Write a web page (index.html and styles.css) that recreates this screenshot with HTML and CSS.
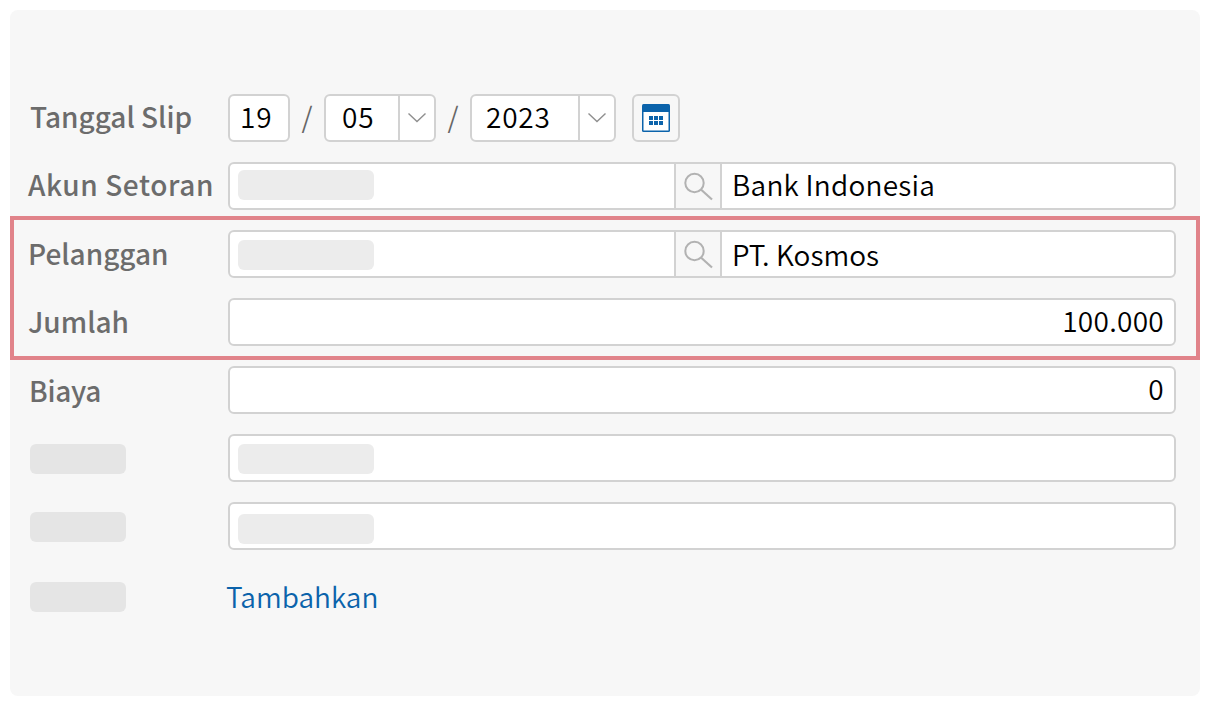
FILE: index.html
```html
<!DOCTYPE html>
<html lang="id">
<head>
<meta charset="utf-8">
<title>Slip</title>
<link rel="stylesheet" href="styles.css">
</head>
<body>
<main class="panel">
  <div class="row">
    <label class="label label-date">Tanggal Slip</label>
    <div class="date">
      <div class="box box-day"><span class="val">19</span></div>
      <span class="slash">/</span>
      <div class="box box-month"><span class="val">05</span><span class="caret"><svg width="18" height="10" viewBox="0 0 18 10"><path d="M0.5 0.5 L9 8.5 L17.5 0.5" fill="none" stroke="#8f8f8f" stroke-width="1.4"/></svg></span></div>
      <span class="slash">/</span>
      <div class="box box-year"><span class="val">2023</span><span class="caret"><svg width="18" height="10" viewBox="0 0 18 10"><path d="M0.5 0.5 L9 8.5 L17.5 0.5" fill="none" stroke="#8f8f8f" stroke-width="1.4"/></svg></span></div>
      <button class="cal" type="button"><svg width="28" height="28" viewBox="0 0 28 28"><rect x="0" y="0" width="28" height="28" rx="1.5" fill="#0b63ab"/><rect x="1.5" y="8" width="25" height="18.5" fill="#fff"/><g fill="#0b63ab"><rect x="7" y="12" width="4" height="4"/><rect x="12" y="12" width="4" height="4"/><rect x="17" y="12" width="4" height="4"/><rect x="7" y="17" width="4" height="4"/><rect x="12" y="17" width="4" height="4"/><rect x="17" y="17" width="4" height="4"/></g></svg></button>
    </div>
  </div>
  <div class="row">
    <label class="label label-akun">Akun Setoran</label>
    <div class="box box-lookup">
      <div class="code code-high"><span class="blur"></span></div>
      <span class="search"><svg width="30" height="30" viewBox="0 0 30 30"><circle cx="11.5" cy="12" r="9.2" fill="none" stroke="#b2b2b2" stroke-width="2"/><path d="M18.2 18.7 L29 28.5" stroke="#b2b2b2" stroke-width="2.2" fill="none"/></svg></span>
      <span class="name name-up">Bank Indonesia</span>
    </div>
  </div>
  <section class="group">
    <div class="row">
      <label class="label">Pelanggan</label>
      <div class="box box-lookup">
        <div class="code code-low"><span class="blur"></span></div>
        <span class="search"><svg width="30" height="30" viewBox="0 0 30 30"><circle cx="11.5" cy="12" r="9.2" fill="none" stroke="#b2b2b2" stroke-width="2"/><path d="M18.2 18.7 L29 28.5" stroke="#b2b2b2" stroke-width="2.2" fill="none"/></svg></span>
        <span class="name name-tight">PT. Kosmos</span>
      </div>
    </div>
    <div class="row">
      <label class="label">Jumlah</label>
      <div class="box box-num"><span class="num">100.000</span></div>
    </div>
  </section>
  <div class="row">
    <label class="label label-biaya">Biaya</label>
    <div class="box box-num"><span class="num">0</span></div>
  </div>
  <div class="row">
    <span class="blur-label"></span>
    <div class="box box-plain"><span class="blur blur-mid"></span></div>
  </div>
  <div class="row">
    <span class="blur-label"></span>
    <div class="box box-plain"><span class="blur blur-low"></span></div>
  </div>
  <div class="row row-link">
    <span class="blur-label"></span>
    <a class="link" href="#">Tambahkan</a>
  </div>
</main>
</body>
</html>
```
FILE: styles.css
```css
* { box-sizing: border-box; }
html, body { margin: 0; padding: 0; background: #fff; }
body {
  width: 1210px;
  height: 706px;
  padding: 10px;
  overflow: hidden;
  font-family: "Noto Sans CJK SC", "Noto Sans", sans-serif;
  font-size: 28px;
  font-weight: 350;
  color: #000;
}
.panel {
  width: 1190px;
  height: 686px;
  background: #f7f7f7;
  border-radius: 8px;
  padding-top: 84px;
  display: flex;
  flex-direction: column;
  gap: 20px;
}
.row {
  display: flex;
  align-items: center;
  height: 48px;
  padding-left: 19px;
  padding-right: 24px;
}
.label {
  width: 199px;
  flex: none;
  color: #6c6c6c;
  font-weight: 500;
  white-space: nowrap;
  position: relative;
  top: -1px;
}
.label-date { padding-left: 1px; top: -2px; }
.label-akun { margin-left: -1px; width: 200px; letter-spacing: 0.6px; top: -2px; }
.label-biaya { top: 0; letter-spacing: -0.3px; }
.box {
  height: 48px;
  background: #fff;
  border: 2px solid #d2d2d2;
  border-radius: 6px;
  display: flex;
  align-items: center;
  flex: none;
}
.date { display: flex; align-items: center; height: 48px; }
.val { padding-left: 10px; letter-spacing: 0.8px; position: relative; top: -2px; }
.box-day { width: 62px; }
.box-month { width: 112px; }
.box-year { width: 146px; }
.box-month .val { padding-left: 16px; flex: 1; }
.box-year .val { padding-left: 14px; flex: 1; }
.caret {
  width: 36px;
  height: 44px;
  border-left: 2px solid #d2d2d2;
  display: flex;
  align-items: center;
  justify-content: center;
}
.slash { width: 34px; text-align: center; color: #666; position: relative; top: -2px; }
.cal {
  width: 48px;
  height: 48px;
  margin-left: 16px;
  padding: 0;
  background: #f7f7f7;
  border: 2px solid #d2d2d2;
  border-radius: 6px;
  display: flex;
  align-items: center;
  justify-content: center;
}
.box-lookup, .box-num, .box-plain { width: 948px; }
.code { width: 444px; padding-left: 8px; flex: none; }
.blur {
  display: block;
  width: 136px;
  height: 30px;
  background: #ececec;
  border-radius: 6px;
}
.code-high .blur { margin-bottom: 2px; }
.code-low .blur { margin-top: 2px; }
.blur-mid { margin-top: 2px; }
.blur-low { margin-top: 6px; }
.box-plain { padding-left: 8px; }
.search {
  width: 48px;
  height: 44px;
  flex: none;
  background: #f7f7f7;
  border-left: 2px solid #d2d2d2;
  border-right: 2px solid #d2d2d2;
  display: flex;
  align-items: center;
  justify-content: center;
}
.name { padding-left: 10px; letter-spacing: 0.25px; }
.name-tight { letter-spacing: 0; }
.name-up { position: relative; top: -2px; }
.num { position: relative; top: -2px; letter-spacing: 0.3px; }
.box-num { justify-content: flex-end; padding-right: 10px; }
.group {
  margin: -14px 0;
  padding: 10px 0;
  border: 4px solid #e1838a;
  display: flex;
  flex-direction: column;
  gap: 20px;
}
.group .row { padding-left: 15px; padding-right: 20px; }
.group .label { width: 199px; margin-left: -1px; margin-right: 1px; }
.blur-label {
  display: block;
  width: 96px;
  height: 30px;
  margin-left: 1px;
  margin-right: 102px;
  margin-top: 2px;
  background: #e5e5e5;
  border-radius: 6px;
  flex: none;
}
.row-link .blur-label { margin-top: 6px; }
.link { color: #0b63ab; text-decoration: none; margin-left: -2px; position: relative; top: 2px; }
```
